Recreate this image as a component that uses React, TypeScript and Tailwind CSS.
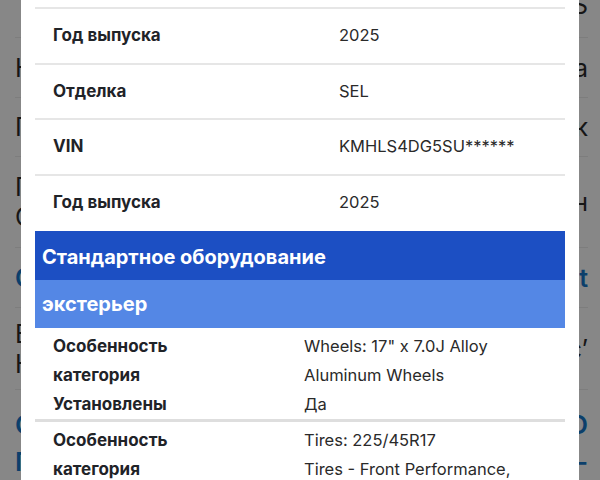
import React from "react";

const font = { fontFamily: "Inter, 'Noto Sans', sans-serif" };

const specs = [
  { label: "Модель", value: "Tucson" },
  { label: "Год выпуска", value: "2025" },
  { label: "Отделка", value: "SEL" },
  { label: "VIN", value: "KMHLS4DG5SU******" },
  { label: "Год выпуска", value: "2025" },
];

const features = [
  [
    { label: "Особенность", value: 'Wheels: 17" x 7.0J Alloy' },
    { label: "категория", value: "Aluminum Wheels" },
    { label: "Установлены", value: "Да" },
  ],
  [
    { label: "Особенность", value: "Tires: 225/45R17" },
    { label: "категория", value: "Tires - Front Performance, Rear Performance" },
    { label: "Установлены", value: "Да" },
  ],
];

const BgRow: React.FC<{ h: string; left: React.ReactNode; right: React.ReactNode; blue?: boolean }> = ({
  h,
  left,
  right,
  blue,
}) => (
  <div
    className={`flex shrink-0 items-center justify-between border-b border-[#7d7d7d] text-[25px] leading-[30px] ${h} ${
      blue ? "text-[#0c3f6b] font-semibold" : "text-[#161616]"
    }`}
  >
    <div>{left}</div>
    <div className="text-right">{right}</div>
  </div>
);

const App: React.FC = () => {
  return (
    <div className="relative h-[480px] w-[600px] overflow-hidden bg-[#878787]" style={font}>
      {/* page behind the dialog */}
      <div className="-mt-[28px] flex flex-col pl-[15px] pr-[12px]">
        <BgRow h="h-[66px]" left="Тип" right="Трансмиссия AS" />
        <BgRow h="h-[60px]" left="Кузов" right="Кроссовера" />
        <BgRow h="h-[59px]" left="Привод" right="Передний привок" />
        <BgRow h="h-[91px]" left={<>Пробег<br />Состояние</>} right="Бензин" />
        <BgRow h="h-[60px]" left="Салон" right="Tucson SEL Light" blue />
        <BgRow h="h-[82px]" left={<>Владельцы<br />Комплект</>} right="Сервис’" />
        <div className="flex justify-between pt-[16px] text-[26px] font-semibold leading-[37px] text-[#0c3f6b]">
          <div>
            Связаться
            <br />
            Показать
          </div>
          <div className="text-right">
            Позвонить О
            <br />
            Еще -
          </div>
        </div>
      </div>

      {/* dialog */}
      <div className="absolute left-[21px] top-[-48.5px] w-[558px] bg-white px-[14px]">
        {specs.map((s, i) => (
          <div
            key={i}
            className="box-border flex h-[55.5px] items-center border-t-2 border-[#e6e6e6] pl-[18px] text-[16.5px]"
          >
            <div className="w-[286px] shrink-0 text-[17px] font-bold text-[#1f2328]">{s.label}</div>
            <div className="text-[#2a2a2a]">{s.value}</div>
          </div>
        ))}
        <div className="mt-[2px] flex h-[49px] items-center bg-[#1c4fc3] pl-[7px] pt-[2px] text-[20px] font-bold text-white">
          Стандартное оборудование
        </div>
        <div className="flex h-[48px] items-center bg-[#5487e5] pl-[7px] text-[20px] font-bold text-white">
          экстерьер
        </div>
        {features.map((group, gi) => (
          <div key={gi} className="border-b-[3px] border-[#dedede] pb-[0.5px] pt-[3.5px]">
            {group.map((f, i) => (
              <div key={i} className="flex pl-[18px] text-[16.5px] leading-[29px]">
                <div className="w-[251px] shrink-0 text-[17px] font-bold text-[#1f2328]">{f.label}</div>
                <div className="w-[230px] text-[#2a2a2a]">{f.value}</div>
              </div>
            ))}
          </div>
        ))}
      </div>
    </div>
  );
};

export default App;
